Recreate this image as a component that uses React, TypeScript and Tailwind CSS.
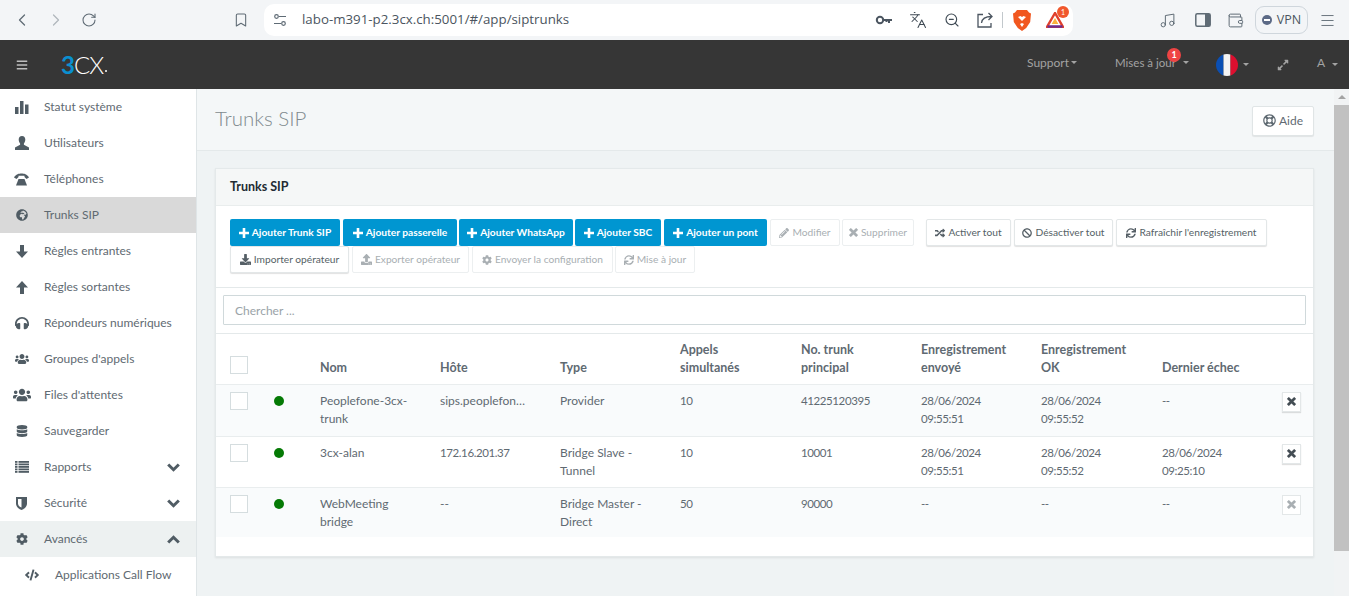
import React from "react";
import { ChevronLeft, ChevronRight, RotateCw, Bookmark, ZoomOut, Languages, Music, Wallet, Menu } from "lucide-react";
import {
  FaGlobeAfrica, FaHeadphones, FaUsers, FaDatabase, FaCog, FaCode,
  FaPencilAlt, FaRandom, FaBan, FaSync, FaDownload, FaUpload, FaExpandAlt, FaRegLifeRing, FaBars,
} from "react-icons/fa";

const font = "font-['Lato','Liberation_Sans',sans-serif]";

function PhoneAlt() {
  return (
    <svg width="15" height="13" viewBox="0 0 15 13" fill="currentColor">
      <path d="M0 4.500C2 1 5 .5 7.500.5S13 1 15 4.500L12.500 6 10.500 4V2.800H4.500V4L2.500 6Z" />
      <path d="M2 12.500 4.500 6H10.500L13 12.500Z" />
    </svg>
  );
}
const Stats = () => (
  <svg width="14" height="13" viewBox="0 0 14 13" fill="currentColor"><rect x="0" y="6" width="3.500" height="7" /><rect x="5" y="0" width="3.500" height="13" /><rect x="10" y="3.500" width="3.500" height="9.500" /></svg>
);
const UserG = () => (
  <svg width="14" height="14" viewBox="0 0 14 14" fill="currentColor"><path d="M7 0c2.200 0 3.300 1.600 3.300 3.600 0 1.700-.7 3-1.400 3.900v1.200L14 11.500V14H0v-2.500l5.100-2.800V7.500C4.400 6.600 3.700 5.300 3.700 3.600 3.700 1.600 4.800 0 7 0Z" /></svg>
);
const ArrowG = ({ up }: { up?: boolean }) => (
  <svg width="12" height="13" viewBox="0 0 12 13" fill="currentColor" className={up ? "rotate-180" : ""}><path d="M4 0h4v6.500h4L6 13 0 6.500h4Z" /></svg>
);
const ListG = () => (
  <svg width="14" height="12" viewBox="0 0 14 12" fill="currentColor">
    {[0, 2.500, 5, 7.500, 10].map((y) => <React.Fragment key={y}><rect x="0" y={y} width="2.500" height="1.800" /><rect x="3.500" y={y} width="10.500" height="1.800" /></React.Fragment>)}
  </svg>
);
const ShieldG = () => (
  <svg width="11" height="13" viewBox="0 0 11 13"><path d="M0 0h11v6.500C11 10 8 12 5.500 13 3 12 0 10 0 6.500Z" fill="currentColor" /><path d="M2 2h3.500v8.500C4 10 2 8.800 2 6.500Z" fill="#fff" /></svg>
);
const Chev = ({ up }: { up?: boolean }) => (
  <svg width="13" height="9" viewBox="0 0 13 9" fill="none" stroke="currentColor" strokeWidth="3" className={up ? "rotate-180" : ""}><path d="M1.200 1.500 6.500 6.700 11.800 1.500" /></svg>
);
const XG = ({ s = 9 }: { s?: number }) => (
  <svg width={s} height={s} viewBox="0 0 10 10" stroke="currentColor" strokeWidth="3" fill="none"><path d="M1 1 9 9M9 1 1 9" /></svg>
);
const PlusG = () => (
  <svg width="10" height="10" viewBox="0 0 10 10" fill="currentColor"><path d="M3.700 0h2.600v3.700H10v2.600H6.300V10H3.700V6.300H0V3.700h3.700Z" /></svg>
);

const nav: { label: string; icon: React.ReactNode; active?: boolean; open?: boolean; chevron?: "down" | "up" }[] = [
  { label: "Statut système", icon: <Stats /> },
  { label: "Utilisateurs", icon: <UserG /> },
  { label: "Téléphones", icon: <PhoneAlt /> },
  { label: "Trunks SIP", icon: <FaGlobeAfrica size={12} />, active: true },
  { label: "Règles entrantes", icon: <ArrowG /> },
  { label: "Règles sortantes", icon: <ArrowG up /> },
  { label: "Répondeurs numériques", icon: <FaHeadphones size={14} /> },
  { label: "Groupes d'appels", icon: <FaUsers size={14} /> },
  { label: "Files d'attentes", icon: <FaUsers size={18} /> },
  { label: "Sauvegarder", icon: <FaDatabase size={12} /> },
  { label: "Rapports", icon: <ListG />, chevron: "down" },
  { label: "Sécurité", icon: <ShieldG />, chevron: "down" },
  { label: "Avancés", icon: <FaCog size={12} />, chevron: "up", open: true },
];

function Caret({ className = "" }: { className?: string }) {
  return <span className={"inline-block w-0 h-0 border-l-[3px] border-r-[3px] border-t-[3px] border-l-transparent border-r-transparent border-t-[#a3a3a3] " + className} />;
}

function Btn({ w, icon, label, kind, ml = "" }: { w: string; icon: React.ReactNode; label: string; kind: "primary" | "normal" | "off"; ml?: string }) {
  const k =
    kind === "primary"
      ? "bg-[#0096d1] text-white font-bold rounded-[2px]"
      : kind === "normal"
      ? "bg-white text-[#555f66] border border-[#e3e7e8] shadow-[0_1px_1px_rgba(0,0,0,0.12)] rounded-[2px]"
      : "bg-white text-[#a9afb3] border border-[#eceff0] rounded-[2px]";
  return (
    <div className={`h-[27px] flex items-center justify-center gap-[3px] text-[10.200px] whitespace-nowrap ${w} ${ml} ${k}`}>
      {icon}
      <span className="pt-[1px]">{label}</span>
    </div>
  );
}

type Row = { name: string[]; host: string; type: string[]; calls: string; num: string; sent: string[]; ok: string[]; fail: string[]; h: string; bg: string; off?: boolean };
const rows: Row[] = [
  { name: ["Peoplefone-3cx-", "trunk"], host: "sips.peoplefon…", type: ["Provider"], calls: "10", num: "41225120395", sent: ["28/06/2024", "09:55:51"], ok: ["28/06/2024", "09:55:52"], fail: ["--"], h: "h-[52px]", bg: "bg-[#f9fbfc]" },
  { name: ["3cx-alan"], host: "172.16.201.37", type: ["Bridge Slave -", "Tunnel"], calls: "10", num: "10001", sent: ["28/06/2024", "09:55:51"], ok: ["28/06/2024", "09:55:52"], fail: ["28/06/2024", "09:25:10"], h: "h-[51px]", bg: "bg-white" },
  { name: ["WebMeeting", "bridge"], host: "--", type: ["Bridge Master -", "Direct"], calls: "50", num: "90000", sent: ["--"], ok: ["--"], fail: ["--"], h: "h-[50px]", bg: "bg-[#f9fbfc]", off: true },
];

function Lines({ l }: { l: string[] }) {
  return <>{l.map((s) => <div key={s}>{s}</div>)}</>;
}

const Box = () => <div className="w-[18px] h-[18px] bg-white border border-[#d5dddf]" />;
const num = "pt-[7px] text-[11.500px] tracking-[-0.400px]";

export default function App() {
  return (
    <div className={`${font} w-[1349px] h-[596px] overflow-hidden flex flex-col text-[12px] text-[#5f6a72] bg-[#eff3f4]`}>
      {/* browser bar */}
      <div className="h-10 bg-[#f3f5f7] flex items-center shrink-0 text-[#5f6b75]">
        <ChevronLeft size={20} strokeWidth={1.5} className="ml-3" />
        <ChevronRight size={20} strokeWidth={1.5} className="ml-[14px] text-[#b0b7bd]" />
        <RotateCw size={16} strokeWidth={1.6} className="ml-[15px]" />
        <Bookmark size={16} strokeWidth={1.6} className="ml-[136px]" />
        <div className="ml-[15px] w-[809px] h-8 bg-white rounded-[10px] flex items-center">
          <svg width="14" height="14" viewBox="0 0 14 14" fill="none" stroke="#5f6b75" strokeWidth="1.2" className="ml-[9px]">
            <circle cx="3.500" cy="3.500" r="1.800" /><path d="M6 3.500h7M1 10.500h7" /><circle cx="10.500" cy="10.500" r="1.800" />
          </svg>
          <span className="ml-[15px] text-[#4b5560] font-['Open_Sans',sans-serif] text-[13.300px]">labo-m391-p2.3cx.ch:5001/#/app/siptrunks</span>
          <div className="ml-auto flex items-center">
            <svg width="18" height="12" viewBox="0 0 18 12" fill="none" stroke="#4b5560" strokeWidth="2"><circle cx="5" cy="6" r="3.200" /><path d="M8 6h9M14 6v3M11.500 6v2" /></svg>
            <Languages size={18} strokeWidth={1.4} className="ml-[16px] text-[#3f4a54]" />
            <ZoomOut size={16} strokeWidth={1.7} className="ml-[17px] text-[#3f4a54]" />
            <svg width="18" height="18" viewBox="0 0 18 18" fill="none" stroke="#4b5560" strokeWidth="1.300" className="ml-[16px]"><path d="M7 3.500H2v12.500h13v-4" /><path d="M5.500 12C6 7.500 9 5.500 15.500 5.500M12.500 2l3.500 3.500L12.500 9" /></svg>
            <div className="ml-[8px] w-px h-4 bg-[#c2c8cc]" />
            <svg width="18" height="21" viewBox="0 0 18 21" className="ml-[10px]"><path d="M4 0h10l2 2.500 2 1-.800 8.500-4 6L9 21l-4.200-3-4-6L0 3.500l2-1Z" fill="#f1571f" /><path d="M9 11 5 7l2.500-1L9 7l1.500-1L13 7ZM7 14l2 3 2-3-2-1Z" fill="#fff" /></svg>
            <div className="relative ml-[15px] mr-[9px] w-[18px] h-[16px]">
              <svg width="18" height="16" viewBox="0 0 18 16" fill="none"><path d="M9 1 1 15h16Z" stroke="#e0402c" strokeWidth="2.400" /><path d="M1.500 14.500h15" stroke="#6a2c91" strokeWidth="2.400" /><path d="M9 6l-3.400 6h6.800Z" fill="#fbb03b" /></svg>
              <span className="absolute -top-[6px] left-[11px] w-[12px] h-[12px] rounded-full bg-[#f1582d] text-white text-[7px] flex items-center justify-center">1</span>
            </div>
          </div>
        </div>
        <Music size={17} strokeWidth={1.4} className="ml-[86px]" />
        <svg width="16" height="14" viewBox="0 0 16 14" className="ml-[19px]"><rect x=".8" y=".8" width="14.400" height="12.400" rx="1.500" fill="none" stroke="#5f6b75" strokeWidth="1.500" /><rect x="10" y="1" width="5" height="12" fill="#5f6b75" /></svg>
        <Wallet size={17} strokeWidth={1.4} className="ml-[16px]" />
        <div className="ml-[11px] w-[53px] h-[28px] rounded-[9px] border border-[#cfd6dc] flex items-center justify-center gap-[5px] text-[#4b5560] text-[12.500px] font-['Open_Sans',sans-serif]">
          <span className="w-[10px] h-[10px] rounded-full bg-[#5c6a86] flex items-center justify-center"><span className="w-[6px] h-[1.500px] bg-white" /></span>
          VPN
        </div>
        <Menu size={17} strokeWidth={1.3} className="ml-[11px]" />
      </div>

      {/* app header */}
      <div className="h-[49px] bg-[#363636] flex items-center shrink-0 text-[#a3a3a3] text-[12px]">
        <FaBars size={12} className="ml-4 text-[#bdbdbd]" />
        <div className="ml-[33px] w-[45px] flex items-end font-['Lato',sans-serif] text-[24px] leading-none tracking-[-1px]">
          <span className="text-[#0a8fd0] font-bold">3</span>
          <span className="text-white font-light">CX</span>
          <span className="ml-[2px] mb-[5px] w-[2px] h-[2px] shrink-0 rounded-full bg-white" />
        </div>
        <div className="ml-[921px] -mt-[4px] flex items-center gap-[2px]">Support<Caret /></div>
        <div className="relative ml-[38px] -mt-[4px] flex items-center text-[11.500px]">
          <span>Mises à jour</span>
          <Caret className="ml-[7px]" />
          <span className="absolute -top-[6px] left-[52px] w-[14px] h-[14px] rounded-full bg-[#ef4444] text-white text-[9px] font-bold flex items-center justify-center">1</span>
        </div>
        <svg width="22" height="22" viewBox="0 0 22 22" className="ml-[27px]">
          <clipPath id="fr"><circle cx="11" cy="11" r="11" /></clipPath>
          <g clipPath="url(#fr)"><rect width="7.500" height="22" fill="#0b4fb3" /><rect x="7.500" width="7" height="22" fill="#f4f4f4" /><rect x="14.500" width="7.500" height="22" fill="#dd0f2f" /></g>
        </svg>
        <Caret className="ml-[5px]" />
        <FaExpandAlt size={12} className="ml-[28px] text-[#a3a3a3]" />
        <span className="ml-[28px] -mt-[3px]">A</span>
        <Caret className="ml-[7px]" />
      </div>

      <div className="flex flex-1 min-h-0">
        {/* sidebar */}
        <div className="w-[197px] shrink-0 bg-white border-r border-[#dfe5e7] flex flex-col">
          {nav.map((n) => (
            <div key={n.label} className={`h-9 shrink-0 flex items-center ${n.active ? "bg-[#d9d9d9]" : n.open ? "bg-[#edf1f1]" : ""}`}>
              <span className="w-[44px] shrink-0 flex justify-center pr-[1px] text-[#505c64]">{n.icon}</span>
              <span className="text-[#5f6a72]">{n.label}</span>
              {n.chevron && (
                <span className="ml-auto mr-[16px] text-[#505c64] flex">
                  <Chev up={n.chevron === "up"} />
                </span>
              )}
            </div>
          ))}
          <div className="h-9 shrink-0 flex items-center">
            <span className="ml-[25px] w-[30px] text-[#505c64]"><FaCode size={14} /></span>
            <span>Applications Call Flow</span>
          </div>
        </div>

        {/* main */}
        <div className="flex-1 min-w-0 flex flex-col">
          <div className="h-[62px] shrink-0 bg-[#f4f7f8] border-b border-[#e4e9ea] flex items-center pl-[18px] pr-[20px]">
            <h1 className="text-[20.500px] font-light text-[#7f8a8e] -mt-[3px]">Trunks SIP</h1>
            <div className="ml-auto w-[62px] h-[30px] bg-white border border-[#e0e5e6] rounded-[2px] shadow-[0_1px_1px_rgba(0,0,0,0.08)] flex items-center justify-center gap-[3px] text-[#5f6a72] mt-[2px]">
              <FaRegLifeRing size={13} /> Aide
            </div>
          </div>

          <div className="ml-[18px] mr-[20px] mt-[17px] h-[389px] bg-white border border-[#e4e9ea] shadow-[0_1px_2px_rgba(0,0,0,0.08)] flex flex-col">
            <div className="h-[37px] shrink-0 bg-[#f5f7f7] border-b border-[#e9eded] flex items-center pl-[14px] text-[12.500px] font-bold text-[#222b33]">Trunks SIP</div>
            <div className="h-[82px] shrink-0 border-b border-[#e4e9ea] pl-[14px] pt-[13px]">
              <div className="flex">
                <Btn w="w-[110px]" kind="primary" icon={<PlusG />} label="Ajouter Trunk SIP" />
                <Btn w="w-[114px]" ml="ml-[3px]" kind="primary" icon={<PlusG />} label="Ajouter passerelle" />
                <Btn w="w-[114px]" ml="ml-[2px]" kind="primary" icon={<PlusG />} label="Ajouter WhatsApp" />
                <Btn w="w-[86px]" ml="ml-[2px]" kind="primary" icon={<PlusG />} label="Ajouter SBC" />
                <Btn w="w-[103px]" ml="ml-[3px]" kind="primary" icon={<PlusG />} label="Ajouter un pont" />
                <Btn w="w-[70px]" ml="ml-[3px]" kind="off" icon={<FaPencilAlt size={10} />} label="Modifier" />
                <Btn w="w-[72px]" ml="ml-[2px]" kind="off" icon={<XG />} label="Supprimer" />
                <Btn w="w-[85px]" ml="ml-[12px]" kind="normal" icon={<FaRandom size={10} />} label="Activer tout" />
                <Btn w="w-[99px]" ml="ml-[3px]" kind="normal" icon={<FaBan size={10} />} label="Désactiver tout" />
                <Btn w="w-[151px]" ml="ml-[3px]" kind="normal" icon={<FaSync size={10} />} label="Rafraîchir l'enregistrement" />
              </div>
              <div className="flex">
                <Btn w="w-[119px]" kind="normal" icon={<FaDownload size={11} />} label="Importer opérateur" />
                <Btn w="w-[117px]" ml="ml-[3px]" kind="off" icon={<FaUpload size={11} />} label="Exporter opérateur" />
                <Btn w="w-[141px]" ml="ml-[3px]" kind="off" icon={<FaCog size={10} />} label="Envoyer la configuration" />
                <Btn w="w-[80px]" ml="ml-[2px]" kind="off" icon={<FaSync size={10} />} label="Mise à jour" />
              </div>
            </div>
            <div className="h-[46px] shrink-0 border-b border-[#e4e9ea] px-[7px] pt-[7px]">
              <div className="h-[30px] border border-[#d0d9db] rounded-[1px] flex items-center pl-[11px] pt-[1px] text-[#9aa3a8] text-[12px]">Chercher ...</div>
            </div>
            <table className="w-full table-fixed border-collapse">
              <colgroup>
                <col className="w-[58px]" /><col className="w-[46px]" /><col className="w-[120px]" /><col className="w-[120px]" /><col className="w-[120px]" />
                <col className="w-[121px]" /><col className="w-[120px]" /><col className="w-[120px]" /><col className="w-[121px]" /><col className="w-[120px]" /><col />
              </colgroup>
              <thead>
                <tr className="h-[50px] border-b border-[#e9edee] text-left align-bottom font-bold text-[#5f6a72] leading-[18px] text-[12.500px]">
                  <th className="pl-[14px] pb-[10px] font-bold"><Box /></th>
                  <th />
                  {["Nom", "Hôte", "Type"].map((h) => <th key={h} className="pb-[7px] font-bold">{h}</th>)}
                  <th className="pb-[7px] font-bold"><Lines l={["Appels", "simultanés"]} /></th>
                  <th className="pb-[7px] font-bold"><Lines l={["No. trunk", "principal"]} /></th>
                  <th className="pb-[7px] font-bold"><Lines l={["Enregistrement", "envoyé"]} /></th>
                  <th className="pb-[7px] font-bold"><Lines l={["Enregistrement", "OK"]} /></th>
                  <th className="pb-[7px] font-bold">Dernier échec</th>
                  <th />
                </tr>
              </thead>
              <tbody>
                {rows.map((r) => (
                  <tr key={r.host} className={`${r.h} ${r.bg} border-b border-[#e9edee] last:border-b-0 align-top leading-[18px]`}>
                    <td className="pl-[14px] pt-[7px]"><Box /></td>
                    <td className="pt-[11px]"><div className="w-[10px] h-[10px] rounded-full bg-[#057a05]" /></td>
                    <td className="pt-[7px]"><Lines l={r.name} /></td>
                    <td className={`whitespace-nowrap ${r.host.startsWith("1") ? num : "pt-[7px]"}`}>{r.host}</td>
                    <td className="pt-[7px]"><Lines l={r.type} /></td>
                    <td className={num}>{r.calls}</td>
                    <td className={num}>{r.num}</td>
                    <td className={num}><Lines l={r.sent} /></td>
                    <td className={num}><Lines l={r.ok} /></td>
                    <td className={num}><Lines l={r.fail} /></td>
                    <td className="pt-[7px]">
                      <div className={`w-[19px] h-[20px] bg-white border border-[#e3e7e8] flex items-center justify-center ${r.off ? "text-[#a9afb3]" : "text-[#444d54] shadow-[0_1px_1px_rgba(0,0,0,0.12)]"}`}>
                        <XG />
                      </div>
                    </td>
                  </tr>
                ))}
              </tbody>
            </table>
          </div>
        </div>

        {/* scrollbar */}
        <div className="w-[15px] shrink-0 bg-[#f1f3f4] flex flex-col items-center">
          <div className="h-4 flex items-center justify-center shrink-0">
            <span className="w-0 h-0 border-l-[4px] border-r-[4px] border-b-[4px] border-l-transparent border-r-transparent border-b-[#a3a3a3]" />
          </div>
          <div className="w-full h-[446px] bg-[#c1c1c1]" />
        </div>
      </div>
    </div>
  );
}
